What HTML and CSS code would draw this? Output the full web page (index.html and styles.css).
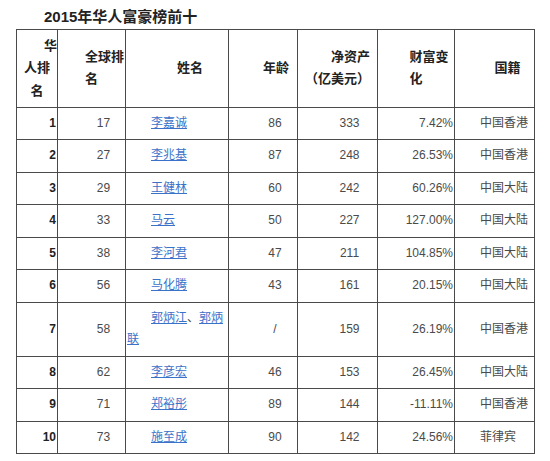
FILE: index.html
```html
<!DOCTYPE html>
<html lang="zh-CN">
<head>
<meta charset="utf-8">
<title>2015年华人富豪榜前十</title>
<link rel="stylesheet" href="styles.css">
</head>
<body>
<div class="page">
  <h1 class="title">2015年华人富豪榜前十</h1>
  <table class="rank">
    <colgroup>
      <col class="c1"><col class="c2"><col class="c3"><col class="c4"><col class="c5"><col class="c6"><col class="c7">
    </colgroup>
    <thead>
      <tr>
        <th>华<br>人排<br>名</th>
        <th>全球排<br>名</th>
        <th>姓名</th>
        <th>年龄</th>
        <th>净资产<br>（亿美元）</th>
        <th>财富变<br>化</th>
        <th>国籍</th>
      </tr>
    </thead>
    <tbody>
      <tr><td class="no">1</td><td class="ctr">17</td><td class="name"><a href="#">李嘉诚</a></td><td class="ctr">86</td><td class="ctr">333</td><td class="pct">7.42%</td><td class="nat">中国香港</td></tr>
      <tr><td class="no">2</td><td class="ctr">27</td><td class="name"><a href="#">李兆基</a></td><td class="ctr">87</td><td class="ctr">248</td><td class="pct">26.53%</td><td class="nat">中国香港</td></tr>
      <tr><td class="no">3</td><td class="ctr">29</td><td class="name"><a href="#">王健林</a></td><td class="ctr">60</td><td class="ctr">242</td><td class="pct">60.26%</td><td class="nat">中国大陆</td></tr>
      <tr><td class="no">4</td><td class="ctr">33</td><td class="name"><a href="#">马云</a></td><td class="ctr">50</td><td class="ctr">227</td><td class="pct">127.00%</td><td class="nat">中国大陆</td></tr>
      <tr><td class="no">5</td><td class="ctr">38</td><td class="name"><a href="#">李河君</a></td><td class="ctr">47</td><td class="ctr">211</td><td class="pct">104.85%</td><td class="nat">中国大陆</td></tr>
      <tr><td class="no">6</td><td class="ctr">56</td><td class="name"><a href="#">马化腾</a></td><td class="ctr">43</td><td class="ctr">161</td><td class="pct">20.15%</td><td class="nat">中国大陆</td></tr>
      <tr><td class="no">7</td><td class="ctr">58</td><td class="name"><a href="#">郭炳江</a>、<a href="#">郭炳</a><br><a href="#">联</a></td><td class="ctr">/</td><td class="ctr">159</td><td class="pct">26.19%</td><td class="nat">中国香港</td></tr>
      <tr><td class="no">8</td><td class="ctr">62</td><td class="name"><a href="#">李彦宏</a></td><td class="ctr">46</td><td class="ctr">153</td><td class="pct">26.45%</td><td class="nat">中国大陆</td></tr>
      <tr><td class="no">9</td><td class="ctr">71</td><td class="name"><a href="#">郑裕彤</a></td><td class="ctr">89</td><td class="ctr">144</td><td class="pct">-11.11%</td><td class="nat">中国香港</td></tr>
      <tr><td class="no">10</td><td class="ctr">73</td><td class="name"><a href="#">施至成</a></td><td class="ctr">90</td><td class="ctr">142</td><td class="pct">24.56%</td><td class="nat">菲律宾</td></tr>
    </tbody>
  </table>
</div>
</body>
</html>
```
FILE: styles.css
```css
html, body {
  margin: 0;
  padding: 0;
  background: #ffffff;
}

.page {
  padding: 7px 0 0 16px;
  font-family: "Liberation Sans", Arial, "Noto Sans CJK SC", sans-serif;
  color: #4a4a4a;
}

.title {
  margin: 0 0 2px 28px;
  font-size: 15px;
  line-height: 20px;
  font-weight: bold;
  color: #222222;
}

.rank {
  border-collapse: collapse;
  table-layout: fixed;
  width: 518px;
  border: 1px solid #4a4a4a;
  font-size: 12px;
}

.c1 { width: 41px; }
.c2 { width: 68px; }
.c3 { width: 103px; }
.c4 { width: 69px; }
.c5 { width: 80px; }
.c6 { width: 77px; }
.c7 { width: 80px; }

.rank th,
.rank td {
  border: 1px solid #4a4a4a;
  padding: 5px 1px;
  vertical-align: middle;
}

.rank th {
  font-size: 13px;
  line-height: 22.3px;
  font-weight: bold;
  color: #222222;
  text-align: center;
  text-indent: 2em;
  white-space: nowrap;
}

.rank td {
  line-height: 21.5px;
}

.no {
  text-align: right;
  font-weight: bold;
  color: #222222;
}

.ctr {
  text-align: center;
  text-indent: 2em;
}

.name {
  text-align: left;
  text-indent: 2em;
}

.name a {
  color: #3b72c9;
  text-decoration: underline;
}

.pct {
  text-align: right;
}

.nat {
  text-align: left;
  text-indent: 2em;
  padding-left: 0;
}
```
